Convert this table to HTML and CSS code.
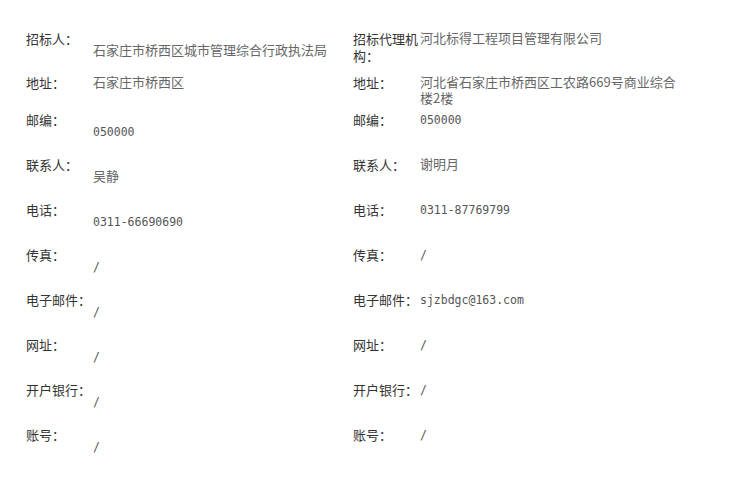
FILE: index.html
```html
<!DOCTYPE html>
<html lang="zh-CN">
<head>
    <meta charset="UTF-8">
    <meta name="viewport" content="width=device-width, initial-scale=1.0">
    <title>招标信息</title>
    <link rel="stylesheet" href="styles.css">
</head>
<body>
    <div class="info">
        <!-- 招标人 / 代理机构 -->
        <div class="row row-first">
            <div class="item"><span class="label">招标人：</span><span class="value below">石家庄市桥西区城市管理综合行政执法局</span></div>
            <div class="item"><span class="label">招标代理机构：</span><span class="value">河北标得工程项目管理有限公司</span></div>
        </div>
        <div class="row row-short">
            <div class="item"><span class="label">地址：</span><span class="value">石家庄市桥西区</span></div>
            <div class="item"><span class="label">地址：</span><span class="value">河北省石家庄市桥西区工农路669号商业综合楼2楼</span></div>
        </div>
        <div class="row">
            <div class="item"><span class="label">邮编：</span><span class="value below mono">050000</span></div>
            <div class="item"><span class="label">邮编：</span><span class="value mono">050000</span></div>
        </div>
        <div class="row">
            <div class="item"><span class="label">联系人：</span><span class="value below">吴静</span></div>
            <div class="item"><span class="label">联系人：</span><span class="value">谢明月</span></div>
        </div>
        <div class="row">
            <div class="item"><span class="label">电话：</span><span class="value below mono">0311-66690690</span></div>
            <div class="item"><span class="label">电话：</span><span class="value mono">0311-87769799</span></div>
        </div>
        <div class="row">
            <div class="item"><span class="label">传真：</span><span class="value below mono">/</span></div>
            <div class="item"><span class="label">传真：</span><span class="value mono">/</span></div>
        </div>
        <div class="row">
            <div class="item"><span class="label">电子邮件：</span><span class="value below mono">/</span></div>
            <div class="item"><span class="label">电子邮件：</span><span class="value mono">sjzbdgc@163.com</span></div>
        </div>
        <div class="row">
            <div class="item"><span class="label">网址：</span><span class="value below mono">/</span></div>
            <div class="item"><span class="label">网址：</span><span class="value mono">/</span></div>
        </div>
        <div class="row">
            <div class="item"><span class="label">开户银行：</span><span class="value below mono">/</span></div>
            <div class="item"><span class="label">开户银行：</span><span class="value mono">/</span></div>
        </div>
        <div class="row">
            <div class="item"><span class="label">账号：</span><span class="value below mono">/</span></div>
            <div class="item"><span class="label">账号：</span><span class="value mono">/</span></div>
        </div>
    </div>
</body>
</html>
```

FILE: styles.css
```css
body {
    margin: 0;
    padding: 30px 0 0 26px;
    font-family: "Noto Sans CJK SC", sans-serif;
    font-size: 13px;
    line-height: 16px;
    background-color: #ffffff;
}

.row {
    display: flex;
    min-height: 45px;
}

.row-first {
    min-height: 44px;
}

.row-short {
    min-height: 37px;
}

.item {
    display: flex;
    align-items: flex-start;
    width: 327px;
}

.label {
    width: 67px;
    flex-shrink: 0;
    line-height: 17px;
    color: #333333;
}

.value {
    width: 260px;
    color: #666666;
}

.below {
    padding-top: 12px;
}

/* 数字、邮箱用等宽字体 */
.mono {
    padding-top: 1px;
    font-family: "DejaVu Sans Mono", monospace;
    font-size: 11.5px;
    color: #555555;
}

.below.mono {
    padding-top: 13px;
}
```
